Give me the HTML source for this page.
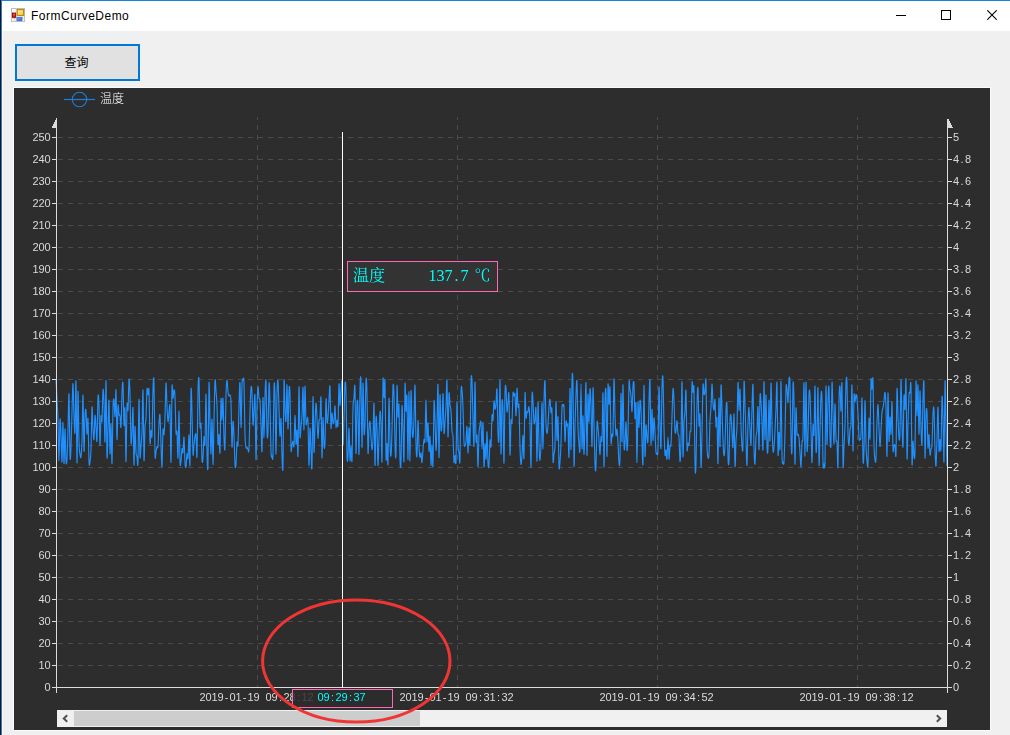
<!DOCTYPE html>
<html lang="zh-CN"><head><meta charset="utf-8"><title>FormCurveDemo</title>
<style>
html,body{margin:0;padding:0}
body{width:1010px;height:735px;overflow:hidden;position:relative;background:#f0f0f0;font-family:"Liberation Sans","Noto Sans CJK SC",sans-serif}
.edge0{position:absolute;left:0;top:0;width:1px;height:735px;background:#1c1008}
.edge1{position:absolute;left:1px;top:0;width:1px;height:735px;background:#1883d7}
.edge2{position:absolute;left:2px;top:31px;width:1px;height:704px;background:#fbf8f5}
.topb{position:absolute;left:1px;top:0;width:1009px;height:1px;background:#1883d7}
.title{position:absolute;left:2px;top:1px;width:1008px;height:30px;background:#fff}
.title .cap{position:absolute;left:29px;top:7px;font-size:12px;letter-spacing:0.48px;line-height:16px;color:#000;white-space:nowrap}
.btn{position:absolute;left:15px;top:44px;width:121px;height:33px;border:2px solid #0078d7;background:#e1e1e1;font-size:12px;line-height:35px;text-align:center;text-indent:-2px;color:#000}
.ctl{position:absolute;top:0;height:30px}
</style></head><body>
<div class="title">
<svg style="position:absolute;left:9px;top:7px" width="14" height="14" viewBox="0 0 15 15">
<rect x="0.5" y="0.5" width="14" height="14" fill="#fff" stroke="#b9b9b9"/>
<rect x="5" y="0" width="1" height="15" fill="#c8c8c8"/><rect x="0" y="4.5" width="5" height="1" fill="#c8c8c8"/><rect x="0" y="10.5" width="15" height="1" fill="#d4d4d4"/><rect x="12" y="9" width="1" height="6" fill="#c8c8c8"/><rect x="3" y="11" width="1" height="4" fill="#d4d4d4"/>
<defs><linearGradient id="gy" x1="0" y1="0" x2="1" y2="1"><stop offset="0" stop-color="#fff3c0"/><stop offset="1" stop-color="#ffc21a"/></linearGradient><linearGradient id="gr" x1="0" y1="0" x2="0" y2="1"><stop offset="0" stop-color="#f06a5a"/><stop offset="1" stop-color="#c81408"/></linearGradient><linearGradient id="gb" x1="0" y1="0" x2="1" y2="1"><stop offset="0" stop-color="#7aaaf4"/><stop offset="1" stop-color="#2f66d4"/></linearGradient></defs>
<rect x="6.7" y="1.7" width="6.8" height="6.3" fill="url(#gy)" stroke="#bf8d0a" stroke-width="1.3"/>
<rect x="1.6" y="5.6" width="3.3" height="4.4" fill="url(#gr)" stroke="#9c0f08" stroke-width="1.1"/>
<rect x="6.5" y="10" width="5" height="3.5" fill="url(#gb)" stroke="#3a6fd0"/>
</svg>
<div class="cap">FormCurveDemo</div>
<svg style="position:absolute;left:894px;top:14px" width="10" height="1"><rect width="10" height="1" fill="#000"/></svg>
<svg style="position:absolute;left:939px;top:9px" width="10" height="10"><rect x="0.5" y="0.5" width="9" height="9" fill="none" stroke="#000"/></svg>
<svg style="position:absolute;left:985px;top:9px" width="10" height="10"><path d="M0.3 0.3L9.7 9.7M9.7 0.3L0.3 9.7" stroke="#000" stroke-width="1.1" fill="none"/></svg>
</div>
<div class="topb"></div><div class="edge0"></div><div class="edge1"></div><div class="edge2"></div>
<div class="btn">查询</div>
<svg width="976" height="642" viewBox="14 88 976 642" style="position:absolute;left:14px;top:88px;display:block;will-change:transform;outline:1px solid #fbfbfb">
<rect x="14" y="88" width="976" height="642" fill="#2d2d2d"/>
<g stroke="#4b4b4b" stroke-width="1" stroke-dasharray="5 5" shape-rendering="crispEdges"><line x1="57.5" y1="665.5" x2="947" y2="665.5"/><line x1="57.5" y1="643.5" x2="947" y2="643.5"/><line x1="57.5" y1="621.5" x2="947" y2="621.5"/><line x1="57.5" y1="599.5" x2="947" y2="599.5"/><line x1="57.5" y1="577.5" x2="947" y2="577.5"/><line x1="57.5" y1="555.5" x2="947" y2="555.5"/><line x1="57.5" y1="533.5" x2="947" y2="533.5"/><line x1="57.5" y1="511.5" x2="947" y2="511.5"/><line x1="57.5" y1="489.5" x2="947" y2="489.5"/><line x1="57.5" y1="467.5" x2="947" y2="467.5"/><line x1="57.5" y1="445.5" x2="947" y2="445.5"/><line x1="57.5" y1="423.5" x2="947" y2="423.5"/><line x1="57.5" y1="401.5" x2="947" y2="401.5"/><line x1="57.5" y1="379.5" x2="947" y2="379.5"/><line x1="57.5" y1="357.5" x2="947" y2="357.5"/><line x1="57.5" y1="335.5" x2="947" y2="335.5"/><line x1="57.5" y1="313.5" x2="947" y2="313.5"/><line x1="57.5" y1="291.5" x2="947" y2="291.5"/><line x1="57.5" y1="269.5" x2="947" y2="269.5"/><line x1="57.5" y1="247.5" x2="947" y2="247.5"/><line x1="57.5" y1="225.5" x2="947" y2="225.5"/><line x1="57.5" y1="203.5" x2="947" y2="203.5"/><line x1="57.5" y1="181.5" x2="947" y2="181.5"/><line x1="57.5" y1="159.5" x2="947" y2="159.5"/><line x1="57.5" y1="137.5" x2="947" y2="137.5"/><line x1="257.5" y1="124.5" x2="257.5" y2="687"/><line x1="257.5" y1="117" x2="257.5" y2="119.5" stroke-dasharray="none"/><line x1="457.5" y1="124.5" x2="457.5" y2="687"/><line x1="457.5" y1="117" x2="457.5" y2="119.5" stroke-dasharray="none"/><line x1="657.5" y1="124.5" x2="657.5" y2="687"/><line x1="657.5" y1="117" x2="657.5" y2="119.5" stroke-dasharray="none"/><line x1="857.5" y1="124.5" x2="857.5" y2="687"/><line x1="857.5" y1="117" x2="857.5" y2="119.5" stroke-dasharray="none"/></g>
<path d="M56.0 380.1C56.2 383.2 56.7 392.0 57.0 398.8C57.3 405.6 57.7 410.5 58.0 420.8C58.3 431.1 58.7 460.8 59.0 460.6C59.3 460.5 59.7 424.1 60.0 419.8C60.3 415.5 60.7 427.8 61.0 434.8C61.3 441.8 61.7 464.0 62.0 461.9C62.3 459.8 62.7 422.0 63.0 422.3C63.3 422.6 63.7 462.6 64.0 463.7C64.3 464.8 64.7 429.3 65.0 428.8C65.3 428.4 65.7 455.8 66.0 460.9C66.3 465.9 66.7 464.2 67.0 459.0C67.3 453.8 67.7 440.4 68.0 429.6C68.3 418.8 68.7 389.8 69.0 394.2C69.3 398.6 69.7 447.3 70.0 456.1C70.3 465.0 70.7 454.7 71.0 447.4C71.3 440.0 71.7 422.4 72.0 411.8C72.3 401.2 72.7 382.9 73.0 383.6C73.3 384.3 73.7 408.1 74.0 416.2C74.3 424.3 74.7 437.9 75.0 432.1C75.3 426.2 75.7 376.0 76.0 381.1C76.3 386.2 76.7 461.2 77.0 462.9C77.3 464.6 77.7 395.0 78.0 391.5C78.3 387.9 78.7 431.0 79.0 441.5C79.3 452.0 79.7 451.8 80.0 454.3C80.3 456.8 80.7 459.0 81.0 456.6C81.3 454.2 81.7 450.1 82.0 439.9C82.3 429.6 82.7 393.3 83.0 395.2C83.3 397.1 83.7 447.7 84.0 451.1C84.3 454.5 84.7 422.5 85.0 415.8C85.3 409.1 85.7 407.7 86.0 410.8C86.3 413.8 86.7 432.9 87.0 434.2C87.3 435.6 87.7 414.3 88.0 418.8C88.3 423.3 88.7 454.3 89.0 461.5C89.3 468.6 89.7 463.9 90.0 461.8C90.3 459.7 90.7 458.0 91.0 448.9C91.3 439.8 91.7 410.4 92.0 407.1C92.3 403.9 92.7 424.0 93.0 429.4C93.3 434.7 93.7 441.7 94.0 439.4C94.3 437.0 94.7 417.5 95.0 415.5C95.3 413.4 95.7 422.9 96.0 427.1C96.3 431.3 96.7 445.6 97.0 440.6C97.3 435.6 97.7 402.9 98.0 397.1C98.3 391.2 98.7 397.4 99.0 405.5C99.3 413.6 99.7 443.7 100.0 445.5C100.3 447.3 100.7 420.6 101.0 416.5C101.3 412.3 101.7 425.2 102.0 420.8C102.3 416.4 102.7 393.0 103.0 390.0C103.3 387.0 103.7 394.2 104.0 402.8C104.3 411.4 104.7 445.3 105.0 441.7C105.3 438.0 105.7 378.3 106.0 380.7C106.3 383.2 106.7 448.4 107.0 456.6C107.3 464.9 107.7 439.6 108.0 430.2C108.3 420.8 108.7 396.5 109.0 400.4C109.3 404.3 109.7 449.7 110.0 453.6C110.3 457.6 110.7 422.3 111.0 424.0C111.3 425.6 111.7 466.2 112.0 463.5C112.3 460.9 112.7 418.8 113.0 408.2C113.3 397.6 113.7 398.3 114.0 399.7C114.3 401.1 114.7 418.2 115.0 416.6C115.3 414.9 115.7 386.2 116.0 390.0C116.3 393.8 116.7 436.7 117.0 439.4C117.3 442.0 117.7 409.9 118.0 405.8C118.3 401.7 118.7 413.0 119.0 414.7C119.3 416.4 119.7 413.9 120.0 416.0C120.3 418.0 120.7 430.7 121.0 426.9C121.3 423.0 121.7 400.2 122.0 393.1C122.3 385.9 122.7 378.5 123.0 383.9C123.3 389.2 123.7 421.2 124.0 425.3C124.3 429.4 124.7 402.5 125.0 408.6C125.3 414.6 125.7 462.2 126.0 461.7C126.3 461.1 126.7 413.9 127.0 405.3C127.3 396.7 127.7 414.3 128.0 410.1C128.3 405.8 128.7 382.2 129.0 379.6C129.3 377.0 129.7 384.3 130.0 394.7C130.3 405.1 130.7 435.6 131.0 442.0C131.3 448.4 131.7 438.7 132.0 433.1C132.3 427.4 132.7 402.8 133.0 408.2C133.3 413.5 133.7 462.0 134.0 465.0C134.3 468.0 134.7 428.5 135.0 426.4C135.3 424.2 135.7 447.2 136.0 452.2C136.3 457.3 136.7 455.1 137.0 456.7C137.3 458.3 137.7 471.4 138.0 461.8C138.3 452.3 138.7 400.4 139.0 399.4C139.3 398.4 139.7 448.0 140.0 455.6C140.3 463.3 140.7 449.0 141.0 445.2C141.3 441.4 141.7 441.7 142.0 432.6C142.3 423.4 142.7 385.8 143.0 390.3C143.3 394.9 143.7 453.7 144.0 459.9C144.3 466.1 144.7 434.3 145.0 427.5C145.3 420.6 145.7 425.0 146.0 418.6C146.3 412.3 146.7 393.2 147.0 389.3C147.3 385.3 147.7 394.6 148.0 394.9C148.3 395.2 148.7 383.0 149.0 391.0C149.3 398.9 149.7 435.9 150.0 442.5C150.3 449.1 150.7 431.6 151.0 430.5C151.3 429.3 151.7 442.3 152.0 435.4C152.3 428.6 152.7 398.0 153.0 389.2C153.3 380.4 153.7 372.0 154.0 382.7C154.3 393.5 154.7 442.3 155.0 453.7C155.3 465.2 155.7 452.7 156.0 451.5C156.3 450.3 156.7 447.4 157.0 446.6C157.3 445.8 157.7 450.2 158.0 446.5C158.3 442.8 158.7 429.5 159.0 424.3C159.3 419.1 159.7 411.9 160.0 415.2C160.3 418.4 160.7 435.3 161.0 443.9C161.3 452.5 161.7 468.9 162.0 466.6C162.3 464.3 162.7 435.5 163.0 430.1C163.3 424.8 163.7 436.7 164.0 434.5C164.3 432.3 164.7 425.7 165.0 417.2C165.3 408.6 165.7 384.9 166.0 383.1C166.3 381.3 166.7 399.8 167.0 406.2C167.3 412.7 167.7 420.6 168.0 421.6C168.3 422.7 168.7 415.0 169.0 412.7C169.3 410.3 169.7 399.2 170.0 407.5C170.3 415.8 170.7 465.5 171.0 462.2C171.3 459.0 171.7 398.5 172.0 387.8C172.3 377.2 172.7 398.0 173.0 398.4C173.3 398.7 173.7 390.3 174.0 390.0C174.3 389.8 174.7 389.7 175.0 396.8C175.3 403.9 175.7 426.6 176.0 432.5C176.3 438.3 176.7 427.7 177.0 431.9C177.3 436.1 177.7 461.3 178.0 457.9C178.3 454.4 178.7 410.6 179.0 411.2C179.3 411.8 179.7 453.2 180.0 461.5C180.3 469.8 180.7 463.2 181.0 461.1C181.3 458.9 181.7 450.0 182.0 448.6C182.3 447.2 182.7 454.6 183.0 452.7C183.3 450.8 183.7 435.5 184.0 437.1C184.3 438.7 184.7 457.4 185.0 462.4C185.3 467.4 185.7 468.4 186.0 467.0C186.3 465.5 186.7 455.2 187.0 453.7C187.3 452.2 187.7 461.2 188.0 458.1C188.3 455.0 188.7 433.9 189.0 435.0C189.3 436.1 189.7 472.2 190.0 464.8C190.3 457.3 190.7 398.7 191.0 390.1C191.3 381.4 191.7 402.3 192.0 413.0C192.3 423.6 192.7 448.6 193.0 453.9C193.3 459.2 193.7 447.7 194.0 444.8C194.3 441.9 194.7 438.1 195.0 436.4C195.3 434.8 195.7 431.7 196.0 435.0C196.3 438.2 196.7 463.3 197.0 456.2C197.3 449.1 197.7 405.1 198.0 392.3C198.3 379.5 198.7 374.0 199.0 379.6C199.3 385.2 199.7 418.5 200.0 426.0C200.3 433.5 200.7 418.8 201.0 424.4C201.3 430.0 201.7 453.8 202.0 459.4C202.3 465.0 202.7 461.8 203.0 458.0C203.3 454.2 203.7 439.2 204.0 436.8C204.3 434.5 204.7 450.8 205.0 443.7C205.3 436.6 205.7 392.5 206.0 394.1C206.3 395.6 206.7 441.0 207.0 452.8C207.3 464.6 207.7 476.5 208.0 465.0C208.3 453.4 208.7 390.7 209.0 383.3C209.3 375.9 209.7 408.7 210.0 420.5C210.3 432.3 210.7 454.3 211.0 454.1C211.3 453.9 211.7 417.4 212.0 419.2C212.3 421.0 212.7 464.4 213.0 464.6C213.3 464.8 213.7 434.5 214.0 420.5C214.3 406.6 214.7 385.8 215.0 380.9C215.3 376.0 215.7 386.9 216.0 391.0C216.3 395.2 216.7 396.9 217.0 405.7C217.3 414.6 217.7 439.2 218.0 444.0C218.3 448.9 218.7 433.4 219.0 434.7C219.3 436.1 219.7 458.2 220.0 452.3C220.3 446.4 220.7 404.4 221.0 399.1C221.3 393.7 221.7 420.2 222.0 420.1C222.3 420.0 222.7 395.5 223.0 398.4C223.3 401.4 223.7 429.8 224.0 438.0C224.3 446.1 224.7 454.4 225.0 447.4C225.3 440.3 225.7 406.8 226.0 395.6C226.3 384.4 226.7 380.9 227.0 380.3C227.3 379.7 227.7 389.3 228.0 392.0C228.3 394.6 228.7 395.6 229.0 396.1C229.3 396.6 229.7 394.0 230.0 395.0C230.3 396.0 230.7 393.2 231.0 401.9C231.3 410.6 231.7 443.8 232.0 447.0C232.3 450.3 232.7 423.3 233.0 421.4C233.3 419.6 233.7 428.5 234.0 435.7C234.3 442.9 234.7 459.6 235.0 464.4C235.3 469.3 235.7 468.2 236.0 464.5C236.3 460.9 236.7 445.8 237.0 442.4C237.3 439.0 237.7 450.3 238.0 444.2C238.3 438.1 238.7 416.3 239.0 406.1C239.3 395.8 239.7 379.2 240.0 382.8C240.3 386.4 240.7 427.4 241.0 427.6C241.3 427.9 241.7 392.5 242.0 384.5C242.3 376.6 242.7 380.3 243.0 380.1C243.3 379.8 243.7 373.8 244.0 383.0C244.3 392.1 244.7 424.1 245.0 434.9C245.3 445.7 245.7 445.6 246.0 447.6C246.3 449.6 246.7 446.7 247.0 447.0C247.3 447.4 247.7 449.4 248.0 449.7C248.3 450.0 248.7 455.3 249.0 449.0C249.3 442.7 249.7 422.3 250.0 412.1C250.3 401.9 250.7 390.9 251.0 387.8C251.3 384.6 251.7 386.9 252.0 393.0C252.3 399.2 252.7 422.1 253.0 424.8C253.3 427.6 253.7 414.2 254.0 409.5C254.3 404.8 254.7 388.3 255.0 396.6C255.3 405.0 255.7 457.5 256.0 459.5C256.3 461.6 256.7 421.0 257.0 408.9C257.3 396.8 257.7 388.7 258.0 386.9C258.3 385.2 258.7 395.8 259.0 398.2C259.3 400.5 259.7 396.5 260.0 401.0C260.3 405.5 260.7 416.5 261.0 424.9C261.3 433.3 261.7 455.9 262.0 451.3C262.3 446.7 262.7 399.8 263.0 397.6C263.3 395.3 263.7 437.9 264.0 437.7C264.3 437.6 264.7 405.9 265.0 396.5C265.3 387.2 265.7 375.6 266.0 381.5C266.3 387.4 266.7 423.8 267.0 432.2C267.3 440.5 267.7 439.8 268.0 431.7C268.3 423.6 268.7 388.4 269.0 383.7C269.3 378.9 269.7 391.8 270.0 403.2C270.3 414.6 270.7 443.3 271.0 452.0C271.3 460.8 271.7 455.5 272.0 455.8C272.3 456.1 272.7 465.1 273.0 453.7C273.3 442.3 273.7 397.0 274.0 387.4C274.3 377.8 274.7 384.9 275.0 396.0C275.3 407.2 275.7 454.4 276.0 454.1C276.3 453.8 276.7 406.5 277.0 394.3C277.3 382.0 277.7 378.3 278.0 380.7C278.3 383.2 278.7 399.9 279.0 409.2C279.3 418.4 279.7 434.6 280.0 436.2C280.3 437.8 280.7 415.5 281.0 418.7C281.3 421.9 281.7 447.6 282.0 455.5C282.3 463.3 282.7 478.1 283.0 465.7C283.3 453.4 283.7 390.9 284.0 381.6C284.3 372.2 284.7 403.3 285.0 409.8C285.3 416.3 285.7 424.8 286.0 420.7C286.3 416.5 286.7 383.5 287.0 384.8C287.3 386.2 287.7 427.9 288.0 428.8C288.3 429.7 288.7 396.0 289.0 390.3C289.3 384.5 289.7 384.6 290.0 394.3C290.3 404.0 290.7 440.0 291.0 448.4C291.3 456.9 291.7 446.0 292.0 444.8C292.3 443.6 292.7 441.1 293.0 441.2C293.3 441.4 293.7 450.1 294.0 445.8C294.3 441.5 294.7 415.7 295.0 415.4C295.3 415.1 295.7 441.7 296.0 444.2C296.3 446.6 296.7 428.2 297.0 430.1C297.3 432.0 297.7 462.7 298.0 455.5C298.3 448.3 298.7 390.2 299.0 386.9C299.3 383.7 299.7 429.2 300.0 435.9C300.3 442.5 300.7 430.0 301.0 426.7C301.3 423.3 301.7 422.2 302.0 415.7C302.3 409.1 302.7 385.0 303.0 387.4C303.3 389.8 303.7 430.2 304.0 430.0C304.3 429.8 304.7 387.4 305.0 386.2C305.3 385.1 305.7 417.2 306.0 422.9C306.3 428.5 306.7 420.5 307.0 420.2C307.3 419.9 307.7 413.4 308.0 420.9C308.3 428.5 308.7 464.1 309.0 465.4C309.3 466.6 309.7 430.7 310.0 428.3C310.3 425.9 310.7 444.5 311.0 450.9C311.3 457.3 311.7 475.7 312.0 466.7C312.3 457.6 312.7 399.1 313.0 396.7C313.3 394.2 313.7 447.1 314.0 451.8C314.3 456.6 314.7 433.4 315.0 425.3C315.3 417.2 315.7 404.4 316.0 403.2C316.3 402.0 316.7 412.2 317.0 418.0C317.3 423.9 317.7 437.8 318.0 438.3C318.3 438.9 318.7 424.8 319.0 421.4C319.3 418.0 319.7 422.0 320.0 418.1C320.3 414.2 320.7 391.4 321.0 398.0C321.3 404.6 321.7 454.4 322.0 457.7C322.3 460.9 322.7 419.8 323.0 417.7C323.3 415.6 323.7 441.0 324.0 445.1C324.3 449.3 324.7 450.3 325.0 442.6C325.3 434.9 325.7 402.4 326.0 399.0C326.3 395.7 326.7 419.2 327.0 422.3C327.3 425.4 327.7 421.3 328.0 417.6C328.3 413.9 328.7 405.3 329.0 400.1C329.3 395.0 329.7 382.1 330.0 386.7C330.3 391.3 330.7 423.6 331.0 428.0C331.3 432.4 331.7 414.0 332.0 413.1C332.3 412.2 332.7 421.0 333.0 422.5C333.3 424.0 333.7 424.7 334.0 421.9C334.3 419.2 334.7 405.2 335.0 406.0C335.3 406.9 335.7 424.9 336.0 427.2C336.3 429.5 336.7 420.4 337.0 420.1C337.3 419.7 337.7 430.9 338.0 424.9C338.3 418.9 338.7 387.4 339.0 384.1C339.3 380.9 339.7 404.5 340.0 405.5C340.3 406.4 340.7 393.4 341.0 389.9C341.3 386.3 341.7 375.0 342.0 384.1C342.3 393.1 342.7 438.5 343.0 444.2C343.3 449.8 343.7 427.8 344.0 417.8C344.3 407.7 344.7 388.1 345.0 384.0C345.3 379.9 345.7 381.3 346.0 393.1C346.3 404.9 346.7 444.4 347.0 454.9C347.3 465.5 347.7 460.8 348.0 456.3C348.3 451.8 348.7 427.4 349.0 428.1C349.3 428.8 349.7 457.7 350.0 460.6C350.3 463.6 350.7 445.8 351.0 445.8C351.3 445.8 351.7 466.9 352.0 460.6C352.3 454.3 352.7 418.5 353.0 408.1C353.3 397.7 353.7 401.4 354.0 398.0C354.3 394.7 354.7 378.8 355.0 388.1C355.3 397.3 355.7 450.8 356.0 453.4C356.3 456.1 356.7 411.4 357.0 404.0C357.3 396.6 357.7 400.5 358.0 408.9C358.3 417.3 358.7 457.7 359.0 454.4C359.3 451.2 359.7 401.4 360.0 389.3C360.3 377.2 360.7 372.1 361.0 381.9C361.3 391.6 361.7 447.5 362.0 447.7C362.3 447.9 362.7 385.8 363.0 383.2C363.3 380.6 363.7 425.1 364.0 432.0C364.3 438.8 364.7 432.8 365.0 424.1C365.3 415.4 365.7 385.0 366.0 379.9C366.3 374.8 366.7 381.6 367.0 393.7C367.3 405.9 367.7 446.9 368.0 452.8C368.3 458.7 368.7 434.2 369.0 429.0C369.3 423.8 369.7 420.3 370.0 421.6C370.3 423.0 370.7 432.5 371.0 437.2C371.3 441.8 371.7 449.5 372.0 449.8C372.3 450.1 372.7 446.7 373.0 439.0C373.3 431.2 373.7 399.1 374.0 403.5C374.3 407.8 374.7 462.8 375.0 465.3C375.3 467.8 375.7 424.4 376.0 418.2C376.3 412.1 376.7 420.4 377.0 428.2C377.3 436.1 377.7 463.8 378.0 465.4C378.3 467.0 378.7 446.7 379.0 437.8C379.3 428.9 379.7 414.7 380.0 412.1C380.3 409.4 380.7 413.7 381.0 421.9C381.3 430.1 381.7 468.3 382.0 461.3C382.3 454.4 382.7 390.9 383.0 380.3C383.3 369.7 383.7 397.4 384.0 397.6C384.3 397.8 384.7 371.5 385.0 381.5C385.3 391.5 385.7 447.4 386.0 457.8C386.3 468.1 386.7 442.7 387.0 443.6C387.3 444.6 387.7 471.0 388.0 463.5C388.3 456.0 388.7 401.8 389.0 398.4C389.3 395.1 389.7 433.7 390.0 443.2C390.3 452.7 390.7 457.8 391.0 455.6C391.3 453.4 391.7 441.3 392.0 429.8C392.3 418.4 392.7 392.6 393.0 386.8C393.3 381.0 393.7 385.4 394.0 394.9C394.3 404.5 394.7 434.4 395.0 444.2C395.3 454.1 395.7 463.5 396.0 453.9C396.3 444.2 396.7 392.3 397.0 386.1C397.3 379.9 397.7 413.6 398.0 416.8C398.3 420.0 398.7 398.3 399.0 405.4C399.3 412.4 399.7 449.7 400.0 459.1C400.3 468.6 400.7 470.7 401.0 461.9C401.3 453.2 401.7 411.8 402.0 406.4C402.3 401.0 402.7 420.5 403.0 429.6C403.3 438.6 403.7 468.2 404.0 460.6C404.3 453.1 404.7 392.7 405.0 384.4C405.3 376.2 405.7 409.2 406.0 411.2C406.3 413.2 406.7 388.4 407.0 396.5C407.3 404.5 407.7 460.4 408.0 459.6C408.3 458.8 408.7 391.4 409.0 391.7C409.3 391.9 409.7 461.2 410.0 461.1C410.3 461.0 410.7 396.8 411.0 391.1C411.3 385.4 411.7 419.4 412.0 427.1C412.3 434.7 412.7 438.6 413.0 437.2C413.3 435.7 413.7 426.9 414.0 418.3C414.3 409.7 414.7 381.3 415.0 385.5C415.3 389.6 415.7 431.7 416.0 443.4C416.3 455.1 416.7 459.4 417.0 455.6C417.3 451.8 417.7 422.2 418.0 420.6C418.3 419.0 418.7 439.9 419.0 446.0C419.3 452.1 419.7 456.2 420.0 457.4C420.3 458.5 420.7 451.9 421.0 452.8C421.3 453.7 421.7 463.2 422.0 462.6C422.3 462.0 422.7 453.1 423.0 449.2C423.3 445.4 423.7 441.1 424.0 439.5C424.3 438.0 424.7 446.7 425.0 440.2C425.3 433.6 425.7 399.9 426.0 400.2C426.3 400.4 426.7 437.7 427.0 441.5C427.3 445.3 427.7 421.3 428.0 423.0C428.3 424.6 428.7 449.1 429.0 451.3C429.3 453.6 429.7 434.1 430.0 436.5C430.3 438.8 430.7 464.0 431.0 465.4C431.3 466.8 431.7 444.9 432.0 445.0C432.3 445.0 432.7 472.7 433.0 465.6C433.3 458.6 433.7 410.3 434.0 402.5C434.3 394.6 434.7 410.5 435.0 418.5C435.3 426.5 435.7 449.2 436.0 450.3C436.3 451.4 436.7 436.2 437.0 425.2C437.3 414.3 437.7 379.3 438.0 384.8C438.3 390.2 438.7 455.9 439.0 457.6C439.3 459.3 439.7 399.7 440.0 394.9C440.3 390.2 440.7 424.2 441.0 429.0C441.3 433.7 441.7 429.3 442.0 423.4C442.3 417.5 442.7 392.1 443.0 393.6C443.3 395.0 443.7 427.6 444.0 432.4C444.3 437.2 444.7 426.7 445.0 422.4C445.3 418.1 445.7 413.5 446.0 406.5C446.3 399.5 446.7 375.5 447.0 380.5C447.3 385.6 447.7 434.6 448.0 436.8C448.3 439.0 448.7 399.1 449.0 393.8C449.3 388.4 449.7 401.9 450.0 404.8C450.3 407.7 450.7 406.6 451.0 411.0C451.3 415.5 451.7 427.2 452.0 431.4C452.3 435.6 452.7 431.3 453.0 436.4C453.3 441.6 453.7 459.0 454.0 462.2C454.3 465.4 454.7 455.8 455.0 455.6C455.3 455.3 455.7 469.7 456.0 460.8C456.3 451.8 456.7 404.5 457.0 401.8C457.3 399.1 457.7 436.0 458.0 444.5C458.3 453.0 458.7 450.1 459.0 452.6C459.3 455.1 459.7 469.5 460.0 459.6C460.3 449.6 460.7 404.5 461.0 393.0C461.3 381.4 461.7 387.9 462.0 390.4C462.3 392.9 462.7 399.4 463.0 408.0C463.3 416.6 463.7 435.9 464.0 442.2C464.3 448.5 464.7 445.8 465.0 445.7C465.3 445.5 465.7 444.4 466.0 441.2C466.3 438.0 466.7 424.6 467.0 426.6C467.3 428.6 467.7 452.9 468.0 453.1C468.3 453.3 468.7 429.3 469.0 427.8C469.3 426.2 469.7 451.4 470.0 443.8C470.3 436.3 470.7 392.8 471.0 382.4C471.3 372.0 471.7 375.3 472.0 381.4C472.3 387.5 472.7 408.2 473.0 418.9C473.3 429.5 473.7 451.6 474.0 445.5C474.3 439.3 474.7 383.0 475.0 382.0C475.3 381.1 475.7 430.8 476.0 439.8C476.3 448.7 476.7 431.1 477.0 435.6C477.3 440.1 477.7 467.3 478.0 466.9C478.3 466.5 478.7 440.4 479.0 433.4C479.3 426.5 479.7 427.0 480.0 425.2C480.3 423.5 480.7 418.7 481.0 422.8C481.3 426.8 481.7 449.3 482.0 449.3C482.3 449.3 482.7 419.7 483.0 422.6C483.3 425.5 483.7 463.0 484.0 466.6C484.3 470.1 484.7 445.0 485.0 443.8C485.3 442.5 485.7 461.1 486.0 459.1C486.3 457.1 486.7 431.1 487.0 431.8C487.3 432.5 487.7 457.8 488.0 463.3C488.3 468.9 488.7 468.9 489.0 465.0C489.3 461.2 489.7 443.3 490.0 440.2C490.3 437.1 490.7 450.6 491.0 446.5C491.3 442.4 491.7 419.8 492.0 415.5C492.3 411.1 492.7 422.9 493.0 420.4C493.3 418.0 493.7 402.8 494.0 401.0C494.3 399.1 494.7 408.6 495.0 409.1C495.3 409.6 495.7 407.2 496.0 404.0C496.3 400.7 496.7 384.9 497.0 389.6C497.3 394.4 497.7 424.6 498.0 432.7C498.3 440.8 498.7 447.0 499.0 438.3C499.3 429.6 499.7 377.8 500.0 380.3C500.3 382.9 500.7 450.0 501.0 453.8C501.3 457.7 501.7 410.5 502.0 403.3C502.3 396.0 502.7 400.4 503.0 410.4C503.3 420.4 503.7 466.0 504.0 463.1C504.3 460.3 504.7 405.9 505.0 393.5C505.3 381.1 505.7 385.5 506.0 388.5C506.3 391.6 506.7 409.5 507.0 411.8C507.3 414.1 507.7 405.1 508.0 402.4C508.3 399.7 508.7 386.8 509.0 395.5C509.3 404.2 509.7 450.5 510.0 454.7C510.3 459.0 510.7 426.3 511.0 420.9C511.3 415.6 511.7 427.2 512.0 422.6C512.3 418.1 512.7 397.9 513.0 393.5C513.3 389.1 513.7 396.1 514.0 396.2C514.3 396.3 514.7 391.0 515.0 394.3C515.3 397.5 515.7 416.6 516.0 415.6C516.3 414.6 516.7 389.9 517.0 388.4C517.3 387.0 517.7 404.0 518.0 406.9C518.3 409.8 518.7 399.3 519.0 406.0C519.3 412.6 519.7 437.1 520.0 446.8C520.3 456.5 520.7 462.8 521.0 464.3C521.3 465.7 521.7 460.1 522.0 455.3C522.3 450.5 522.7 434.8 523.0 435.3C523.3 435.7 523.7 464.7 524.0 457.8C524.3 450.8 524.7 400.1 525.0 393.4C525.3 386.8 525.7 414.8 526.0 417.8C526.3 420.9 526.7 412.7 527.0 411.8C527.3 410.8 527.7 412.7 528.0 411.9C528.3 411.1 528.7 405.1 529.0 407.1C529.3 409.1 529.7 414.0 530.0 423.9C530.3 433.9 530.7 471.2 531.0 466.7C531.3 462.2 531.7 407.7 532.0 396.8C532.3 385.9 532.7 396.8 533.0 401.2C533.3 405.5 533.7 419.6 534.0 422.7C534.3 425.9 534.7 422.2 535.0 419.9C535.3 417.6 535.7 402.1 536.0 409.0C536.3 415.9 536.7 462.3 537.0 461.2C537.3 460.1 537.7 404.9 538.0 402.2C538.3 399.4 538.7 435.1 539.0 444.8C539.3 454.5 539.7 460.6 540.0 460.4C540.3 460.3 540.7 453.2 541.0 443.6C541.3 434.0 541.7 401.9 542.0 402.8C542.3 403.7 542.7 449.1 543.0 448.9C543.3 448.8 543.7 413.2 544.0 401.9C544.3 390.6 544.7 377.5 545.0 381.1C545.3 384.7 545.7 414.8 546.0 423.5C546.3 432.2 546.7 433.1 547.0 433.3C547.3 433.6 547.7 429.3 548.0 424.8C548.3 420.4 548.7 411.1 549.0 406.8C549.3 402.6 549.7 398.5 550.0 399.5C550.3 400.5 550.7 410.9 551.0 412.7C551.3 414.5 551.7 402.5 552.0 410.4C552.3 418.3 552.7 452.9 553.0 460.2C553.3 467.4 553.7 456.6 554.0 454.0C554.3 451.4 554.7 453.4 555.0 444.7C555.3 435.9 555.7 402.3 556.0 401.6C556.3 400.9 556.7 437.6 557.0 440.2C557.3 442.8 557.7 412.8 558.0 417.0C558.3 421.3 558.7 458.5 559.0 465.9C559.3 473.3 559.7 465.4 560.0 461.7C560.3 457.9 560.7 452.3 561.0 443.3C561.3 434.4 561.7 414.1 562.0 407.9C562.3 401.7 562.7 406.1 563.0 406.1C563.3 406.0 563.7 401.7 564.0 407.5C564.3 413.4 564.7 439.1 565.0 441.4C565.3 443.7 565.7 424.1 566.0 421.5C566.3 419.0 566.7 425.4 567.0 426.1C567.3 426.8 567.7 420.9 568.0 426.0C568.3 431.0 568.7 462.8 569.0 456.6C569.3 450.3 569.7 389.5 570.0 388.4C570.3 387.2 570.7 450.7 571.0 449.5C571.3 448.2 571.7 391.7 572.0 380.9C572.3 370.1 572.7 370.5 573.0 384.6C573.3 398.7 573.7 458.5 574.0 465.5C574.3 472.5 574.7 438.4 575.0 426.6C575.3 414.8 575.7 402.3 576.0 394.8C576.3 387.4 576.7 376.4 577.0 381.8C577.3 387.2 577.7 417.2 578.0 427.4C578.3 437.7 578.7 439.8 579.0 443.4C579.3 446.9 579.7 458.5 580.0 448.5C580.3 438.6 580.7 383.8 581.0 383.8C581.3 383.8 581.7 443.1 582.0 448.5C582.3 453.8 582.7 414.8 583.0 415.8C583.3 416.8 583.7 453.7 584.0 454.5C584.3 455.4 584.7 432.8 585.0 420.9C585.3 409.0 585.7 377.4 586.0 383.2C586.3 388.9 586.7 453.4 587.0 455.3C587.3 457.3 587.7 400.3 588.0 394.8C588.3 389.3 588.7 423.2 589.0 422.2C589.3 421.3 589.7 391.8 590.0 389.0C590.3 386.1 590.7 395.5 591.0 405.1C591.3 414.7 591.7 449.5 592.0 446.6C592.3 443.8 592.7 391.7 593.0 388.0C593.3 384.3 593.7 411.4 594.0 424.2C594.3 437.0 594.7 457.7 595.0 464.8C595.3 471.9 595.7 473.5 596.0 466.7C596.3 459.8 596.7 430.3 597.0 423.7C597.3 417.2 597.7 424.6 598.0 427.3C598.3 430.1 598.7 435.9 599.0 440.4C599.3 445.0 599.7 455.2 600.0 454.6C600.3 454.0 600.7 439.3 601.0 436.7C601.3 434.2 601.7 446.5 602.0 439.2C602.3 431.9 602.7 388.4 603.0 393.1C603.3 397.7 603.7 465.5 604.0 466.8C604.3 468.2 604.7 413.2 605.0 400.9C605.3 388.7 605.7 383.9 606.0 393.2C606.3 402.4 606.7 457.7 607.0 456.4C607.3 455.2 607.7 394.2 608.0 385.5C608.3 376.8 608.7 403.9 609.0 404.3C609.3 404.6 609.7 381.5 610.0 387.7C610.3 393.9 610.7 433.7 611.0 441.5C611.3 449.3 611.7 435.8 612.0 434.2C612.3 432.7 612.7 441.6 613.0 432.4C613.3 423.2 613.7 382.0 614.0 379.1C614.3 376.2 614.7 405.8 615.0 415.2C615.3 424.5 615.7 432.9 616.0 435.3C616.3 437.6 616.7 428.1 617.0 429.3C617.3 430.6 617.7 437.2 618.0 442.8C618.3 448.4 618.7 460.2 619.0 462.8C619.3 465.3 619.7 469.6 620.0 458.0C620.3 446.5 620.7 396.2 621.0 393.5C621.3 390.9 621.7 443.3 622.0 441.9C622.3 440.4 622.7 384.1 623.0 384.7C623.3 385.2 623.7 435.2 624.0 445.1C624.3 454.9 624.7 447.5 625.0 443.6C625.3 439.8 625.7 420.9 626.0 422.0C626.3 423.1 626.7 448.3 627.0 450.3C627.3 452.3 627.7 445.4 628.0 434.1C628.3 422.9 628.7 390.4 629.0 382.9C629.3 375.4 629.7 387.1 630.0 389.2C630.3 391.3 630.7 391.8 631.0 395.5C631.3 399.3 631.7 413.0 632.0 411.5C632.3 410.0 632.7 391.2 633.0 386.6C633.3 382.1 633.7 378.9 634.0 384.2C634.3 389.6 634.7 415.4 635.0 418.7C635.3 421.9 635.7 396.3 636.0 403.7C636.3 411.0 636.7 462.8 637.0 462.6C637.3 462.5 637.7 408.4 638.0 402.6C638.3 396.7 638.7 427.6 639.0 427.3C639.3 427.0 639.7 403.6 640.0 400.8C640.3 397.9 640.7 403.4 641.0 410.3C641.3 417.1 641.7 433.1 642.0 441.8C642.3 450.5 642.7 472.1 643.0 462.7C643.3 453.3 643.7 386.6 644.0 385.4C644.3 384.3 644.7 449.1 645.0 455.8C645.3 462.5 645.7 428.6 646.0 425.4C646.3 422.3 646.7 434.2 647.0 436.8C647.3 439.3 647.7 446.6 648.0 440.8C648.3 435.0 648.7 411.9 649.0 402.0C649.3 392.0 649.7 374.1 650.0 381.1C650.3 388.1 650.7 439.4 651.0 444.1C651.3 448.8 651.7 409.9 652.0 409.3C652.3 408.7 652.7 439.1 653.0 440.5C653.3 442.0 653.7 419.3 654.0 418.0C654.3 416.6 654.7 426.6 655.0 432.3C655.3 438.0 655.7 448.9 656.0 452.3C656.3 455.7 656.7 453.4 657.0 452.8C657.3 452.2 657.7 459.6 658.0 448.7C658.3 437.8 658.7 391.5 659.0 387.3C659.3 383.0 659.7 413.2 660.0 423.3C660.3 433.3 660.7 453.6 661.0 447.6C661.3 441.6 661.7 398.6 662.0 387.2C662.3 375.9 662.7 372.6 663.0 379.3C663.3 386.0 663.7 414.8 664.0 427.4C664.3 440.0 664.7 450.9 665.0 454.7C665.3 458.5 665.7 449.4 666.0 450.1C666.3 450.8 666.7 461.2 667.0 459.0C667.3 456.8 667.7 436.9 668.0 436.9C668.3 436.9 668.7 457.5 669.0 459.0C669.3 460.5 669.7 448.4 670.0 446.0C670.3 443.5 670.7 449.1 671.0 444.3C671.3 439.4 671.7 426.1 672.0 416.9C672.3 407.6 672.7 391.6 673.0 388.9C673.3 386.3 673.7 394.1 674.0 401.0C674.3 408.0 674.7 425.8 675.0 430.7C675.3 435.6 675.7 432.2 676.0 430.6C676.3 428.9 676.7 420.3 677.0 420.9C677.3 421.4 677.7 431.1 678.0 433.8C678.3 436.6 678.7 432.6 679.0 437.2C679.3 441.9 679.7 460.6 680.0 461.5C680.3 462.4 680.7 455.9 681.0 442.6C681.3 429.3 681.7 379.6 682.0 381.8C682.3 384.1 682.7 449.1 683.0 455.9C683.3 462.7 683.7 430.1 684.0 422.7C684.3 415.3 684.7 416.9 685.0 411.6C685.3 406.3 685.7 385.0 686.0 391.1C686.3 397.1 686.7 439.3 687.0 448.0C687.3 456.7 687.7 443.6 688.0 443.2C688.3 442.7 688.7 447.0 689.0 445.1C689.3 443.2 689.7 434.7 690.0 431.8C690.3 428.9 690.7 435.9 691.0 427.8C691.3 419.6 691.7 389.0 692.0 383.1C692.3 377.1 692.7 391.1 693.0 392.3C693.3 393.5 693.7 378.1 694.0 390.2C694.3 402.3 694.7 452.8 695.0 465.1C695.3 477.4 695.7 474.2 696.0 464.2C696.3 454.1 696.7 417.2 697.0 404.6C697.3 391.9 697.7 384.7 698.0 388.2C698.3 391.6 698.7 420.8 699.0 425.4C699.3 429.9 699.7 408.4 700.0 415.3C700.3 422.3 700.7 464.1 701.0 467.0C701.3 469.9 701.7 446.1 702.0 432.5C702.3 419.0 702.7 391.8 703.0 385.4C703.3 379.1 703.7 393.3 704.0 394.3C704.3 395.4 704.7 393.9 705.0 391.7C705.3 389.6 705.7 372.5 706.0 381.4C706.3 390.3 706.7 432.5 707.0 445.1C707.3 457.8 707.7 456.0 708.0 457.4C708.3 458.8 708.7 459.5 709.0 453.4C709.3 447.4 709.7 428.8 710.0 421.0C710.3 413.3 710.7 413.1 711.0 407.0C711.3 400.8 711.7 384.7 712.0 384.1C712.3 383.6 712.7 399.2 713.0 403.5C713.3 407.8 713.7 410.7 714.0 410.0C714.3 409.4 714.7 396.9 715.0 399.7C715.3 402.5 715.7 423.6 716.0 426.8C716.3 429.9 716.7 412.3 717.0 418.5C717.3 424.6 717.7 466.9 718.0 463.5C718.3 460.1 718.7 401.0 719.0 398.2C719.3 395.3 719.7 448.6 720.0 446.5C720.3 444.5 720.7 392.1 721.0 386.0C721.3 380.0 721.7 401.2 722.0 410.2C722.3 419.2 722.7 432.7 723.0 440.3C723.3 447.9 723.7 455.0 724.0 455.7C724.3 456.5 724.7 452.3 725.0 444.8C725.3 437.4 725.7 417.6 726.0 411.0C726.3 404.5 726.7 397.8 727.0 405.5C727.3 413.2 727.7 447.9 728.0 457.1C728.3 466.3 728.7 466.9 729.0 460.8C729.3 454.8 729.7 428.4 730.0 420.8C730.3 413.3 730.7 413.7 731.0 415.7C731.3 417.7 731.7 427.6 732.0 432.8C732.3 438.1 732.7 450.4 733.0 447.3C733.3 444.2 733.7 411.0 734.0 414.1C734.3 417.2 734.7 461.7 735.0 466.1C735.3 470.5 735.7 447.1 736.0 440.5C736.3 433.9 736.7 436.1 737.0 426.5C737.3 416.8 737.7 385.3 738.0 382.6C738.3 379.9 738.7 409.2 739.0 410.3C739.3 411.4 739.7 386.7 740.0 389.2C740.3 391.7 740.7 415.7 741.0 425.2C741.3 434.7 741.7 443.0 742.0 446.3C742.3 449.7 742.7 455.9 743.0 445.3C743.3 434.6 743.7 389.2 744.0 382.5C744.3 375.8 744.7 395.4 745.0 405.0C745.3 414.6 745.7 429.9 746.0 439.9C746.3 450.0 746.7 467.9 747.0 465.1C747.3 462.3 747.7 432.7 748.0 423.1C748.3 413.6 748.7 406.5 749.0 407.6C749.3 408.8 749.7 423.9 750.0 430.0C750.3 436.2 750.7 448.0 751.0 444.4C751.3 440.7 751.7 418.1 752.0 408.3C752.3 398.5 752.7 379.1 753.0 385.6C753.3 392.0 753.7 434.0 754.0 447.0C754.3 460.1 754.7 465.6 755.0 464.0C755.3 462.4 755.7 442.9 756.0 437.3C756.3 431.6 756.7 435.0 757.0 430.0C757.3 424.9 757.7 403.7 758.0 406.9C758.3 410.2 758.7 451.2 759.0 449.6C759.3 447.9 759.7 404.8 760.0 396.9C760.3 388.9 760.7 397.7 761.0 402.0C761.3 406.2 761.7 414.7 762.0 422.6C762.3 430.4 762.7 455.8 763.0 448.9C763.3 442.1 763.7 383.2 764.0 381.7C764.3 380.1 764.7 437.4 765.0 439.6C765.3 441.8 765.7 393.7 766.0 394.8C766.3 396.0 766.7 437.9 767.0 446.7C767.3 455.5 767.7 455.3 768.0 447.5C768.3 439.7 768.7 401.2 769.0 400.1C769.3 399.0 769.7 443.9 770.0 441.0C770.3 438.2 770.7 386.2 771.0 383.2C771.3 380.3 771.7 412.2 772.0 423.4C772.3 434.6 772.7 446.5 773.0 450.5C773.3 454.5 773.7 450.7 774.0 447.3C774.3 444.0 774.7 436.8 775.0 430.3C775.3 423.8 775.7 416.3 776.0 408.5C776.3 400.7 776.7 375.9 777.0 383.5C777.3 391.1 777.7 446.0 778.0 454.1C778.3 462.3 778.7 433.4 779.0 432.4C779.3 431.4 779.7 456.8 780.0 448.3C780.3 439.7 780.7 380.2 781.0 381.3C781.3 382.3 781.7 441.0 782.0 454.5C782.3 468.0 782.7 461.2 783.0 462.4C783.3 463.6 783.7 466.7 784.0 461.7C784.3 456.7 784.7 444.7 785.0 432.4C785.3 420.1 785.7 395.2 786.0 388.0C786.3 380.8 786.7 386.8 787.0 389.2C787.3 391.7 787.7 404.2 788.0 402.5C788.3 400.8 788.7 382.1 789.0 379.2C789.3 376.3 789.7 375.2 790.0 385.0C790.3 394.8 790.7 427.1 791.0 438.0C791.3 449.0 791.7 459.6 792.0 450.7C792.3 441.8 792.7 392.9 793.0 384.6C793.3 376.4 793.7 388.1 794.0 401.3C794.3 414.6 794.7 463.0 795.0 464.2C795.3 465.4 795.7 413.6 796.0 408.5C796.3 403.4 796.7 429.4 797.0 433.7C797.3 437.9 797.7 433.4 798.0 434.1C798.3 434.8 798.7 434.8 799.0 437.8C799.3 440.8 799.7 447.3 800.0 452.1C800.3 456.9 800.7 468.4 801.0 466.7C801.3 465.1 801.7 447.5 802.0 442.4C802.3 437.3 802.7 446.0 803.0 436.1C803.3 426.2 803.7 379.6 804.0 382.9C804.3 386.3 804.7 456.2 805.0 456.1C805.3 456.0 805.7 383.4 806.0 382.1C806.3 380.9 806.7 439.8 807.0 448.7C807.3 457.7 807.7 444.6 808.0 435.6C808.3 426.6 808.7 401.5 809.0 394.7C809.3 387.9 809.7 389.0 810.0 394.7C810.3 400.4 810.7 417.6 811.0 428.9C811.3 440.3 811.7 463.3 812.0 462.7C812.3 462.1 812.7 430.1 813.0 425.3C813.3 420.6 813.7 440.7 814.0 434.2C814.3 427.7 814.7 383.4 815.0 386.1C815.3 388.7 815.7 441.9 816.0 450.0C816.3 458.2 816.7 445.3 817.0 434.9C817.3 424.6 817.7 383.2 818.0 388.1C818.3 393.0 818.7 457.2 819.0 464.3C819.3 471.5 819.7 442.3 820.0 430.8C820.3 419.4 820.7 400.8 821.0 395.6C821.3 390.3 821.7 388.2 822.0 399.5C822.3 410.8 822.7 452.7 823.0 463.4C823.3 474.2 823.7 464.3 824.0 463.9C824.3 463.6 824.7 474.5 825.0 461.5C825.3 448.5 825.7 388.9 826.0 386.0C826.3 383.2 826.7 441.8 827.0 444.4C827.3 446.9 827.7 410.6 828.0 401.2C828.3 391.8 828.7 381.9 829.0 387.9C829.3 393.9 829.7 428.0 830.0 437.2C830.3 446.3 830.7 452.1 831.0 443.0C831.3 434.0 831.7 387.8 832.0 382.7C832.3 377.7 832.7 402.5 833.0 412.7C833.3 422.9 833.7 445.4 834.0 443.9C834.3 442.5 834.7 404.7 835.0 403.9C835.3 403.1 835.7 432.7 836.0 439.1C836.3 445.6 836.7 438.2 837.0 442.7C837.3 447.3 837.7 473.7 838.0 466.7C838.3 459.6 838.7 413.9 839.0 400.5C839.3 387.1 839.7 384.6 840.0 386.4C840.3 388.1 840.7 411.6 841.0 411.2C841.3 410.8 841.7 375.1 842.0 384.0C842.3 392.9 842.7 454.5 843.0 464.9C843.3 475.3 843.7 453.0 844.0 446.4C844.3 439.8 844.7 435.8 845.0 425.2C845.3 414.6 845.7 389.8 846.0 382.8C846.3 375.8 846.7 374.7 847.0 383.1C847.3 391.4 847.7 422.7 848.0 433.0C848.3 443.3 848.7 445.5 849.0 444.9C849.3 444.3 849.7 432.7 850.0 429.2C850.3 425.6 850.7 430.9 851.0 423.6C851.3 416.3 851.7 380.8 852.0 385.3C852.3 389.9 852.7 449.1 853.0 450.9C853.3 452.7 853.7 404.5 854.0 396.4C854.3 388.2 854.7 402.3 855.0 402.0C855.3 401.7 855.7 395.1 856.0 394.6C856.3 394.1 856.7 395.8 857.0 399.0C857.3 402.2 857.7 407.0 858.0 413.6C858.3 420.1 858.7 433.9 859.0 438.2C859.3 442.4 859.7 439.4 860.0 438.9C860.3 438.4 860.7 441.9 861.0 435.2C861.3 428.4 861.7 394.0 862.0 398.2C862.3 402.3 862.7 451.5 863.0 460.0C863.3 468.6 863.7 459.5 864.0 449.6C864.3 439.8 864.7 401.5 865.0 400.7C865.3 400.0 865.7 435.1 866.0 445.2C866.3 455.3 866.7 458.2 867.0 461.3C867.3 464.4 867.7 471.2 868.0 464.0C868.3 456.9 868.7 422.7 869.0 418.4C869.3 414.1 869.7 444.6 870.0 438.3C870.3 432.1 870.7 388.9 871.0 380.7C871.3 372.6 871.7 389.4 872.0 389.3C872.3 389.1 872.7 371.0 873.0 380.1C873.3 389.1 873.7 430.4 874.0 443.7C874.3 456.9 874.7 457.1 875.0 459.6C875.3 462.1 875.7 464.6 876.0 458.5C876.3 452.4 876.7 432.1 877.0 423.1C877.3 414.1 877.7 403.8 878.0 404.5C878.3 405.3 878.7 420.7 879.0 427.7C879.3 434.6 879.7 445.9 880.0 446.4C880.3 446.8 880.7 436.0 881.0 430.3C881.3 424.7 881.7 416.2 882.0 412.4C882.3 408.6 882.7 409.6 883.0 407.7C883.3 405.8 883.7 403.7 884.0 401.2C884.3 398.6 884.7 391.2 885.0 392.5C885.3 393.7 885.7 397.9 886.0 408.5C886.3 419.2 886.7 458.9 887.0 456.3C887.3 453.7 887.7 395.5 888.0 393.0C888.3 390.5 888.7 437.1 889.0 441.1C889.3 445.2 889.7 418.3 890.0 417.1C890.3 416.0 890.7 436.7 891.0 434.2C891.3 431.7 891.7 399.5 892.0 402.1C892.3 404.6 892.7 442.3 893.0 449.5C893.3 456.7 893.7 445.9 894.0 445.2C894.3 444.5 894.7 444.0 895.0 445.4C895.3 446.8 895.7 462.9 896.0 453.5C896.3 444.1 896.7 395.4 897.0 389.2C897.3 383.0 897.7 407.9 898.0 416.1C898.3 424.3 898.7 435.6 899.0 438.3C899.3 441.0 899.7 441.9 900.0 432.1C900.3 422.4 900.7 381.3 901.0 379.7C901.3 378.0 901.7 411.2 902.0 422.4C902.3 433.5 902.7 451.1 903.0 446.6C903.3 442.2 903.7 402.0 904.0 395.9C904.3 389.7 904.7 412.2 905.0 409.5C905.3 406.8 905.7 371.7 906.0 379.8C906.3 387.9 906.7 450.4 907.0 458.0C907.3 465.6 907.7 435.7 908.0 425.2C908.3 414.7 908.7 400.3 909.0 394.9C909.3 389.6 909.7 394.4 910.0 393.0C910.3 391.6 910.7 374.8 911.0 386.5C911.3 398.3 911.7 454.3 912.0 463.4C912.3 472.6 912.7 442.3 913.0 441.2C913.3 440.0 913.7 455.0 914.0 456.5C914.3 458.0 914.7 462.8 915.0 450.3C915.3 437.8 915.7 387.2 916.0 381.4C916.3 375.6 916.7 415.1 917.0 415.7C917.3 416.3 917.7 382.1 918.0 385.1C918.3 388.2 918.7 433.3 919.0 434.2C919.3 435.2 919.7 391.9 920.0 390.8C920.3 389.7 920.7 418.6 921.0 427.5C921.3 436.4 921.7 448.9 922.0 444.1C922.3 439.3 922.7 408.6 923.0 398.6C923.3 388.5 923.7 373.9 924.0 383.8C924.3 393.6 924.7 452.6 925.0 457.7C925.3 462.8 925.7 422.1 926.0 414.5C926.3 407.0 926.7 406.9 927.0 412.4C927.3 418.0 927.7 444.2 928.0 447.8C928.3 451.5 928.7 433.4 929.0 434.6C929.3 435.7 929.7 452.1 930.0 454.6C930.3 457.0 930.7 450.7 931.0 449.1C931.3 447.4 931.7 450.4 932.0 444.6C932.3 438.8 932.7 420.1 933.0 414.3C933.3 408.4 933.7 403.8 934.0 409.7C934.3 415.5 934.7 439.7 935.0 449.1C935.3 458.5 935.7 467.8 936.0 466.0C936.3 464.2 936.7 448.0 937.0 438.2C937.3 428.4 937.7 405.2 938.0 407.3C938.3 409.4 938.7 445.3 939.0 450.7C939.3 456.1 939.7 439.8 940.0 439.5C940.3 439.3 940.7 456.2 941.0 449.1C941.3 442.0 941.7 402.1 942.0 397.0C942.3 392.0 942.7 408.0 943.0 418.8C943.3 429.5 943.7 467.7 944.0 461.4C944.3 455.2 944.7 386.9 945.0 381.2C945.3 375.5 945.7 413.3 946.0 427.4C946.3 441.5 946.8 459.5 947.0 465.9" fill="none" stroke="#1e90ff" stroke-width="1.15" stroke-linejoin="round"/>
<g fill="#dcdcdc" shape-rendering="crispEdges"><rect x="56" y="119" width="1" height="574"/><rect x="947" y="119" width="1" height="574"/><rect x="56" y="687" width="892" height="1"/><rect x="52" y="687" width="4" height="1"/><rect x="948" y="687" width="4" height="1"/><rect x="52" y="665" width="4" height="1"/><rect x="948" y="665" width="4" height="1"/><rect x="52" y="643" width="4" height="1"/><rect x="948" y="643" width="4" height="1"/><rect x="52" y="621" width="4" height="1"/><rect x="948" y="621" width="4" height="1"/><rect x="52" y="599" width="4" height="1"/><rect x="948" y="599" width="4" height="1"/><rect x="52" y="577" width="4" height="1"/><rect x="948" y="577" width="4" height="1"/><rect x="52" y="555" width="4" height="1"/><rect x="948" y="555" width="4" height="1"/><rect x="52" y="533" width="4" height="1"/><rect x="948" y="533" width="4" height="1"/><rect x="52" y="511" width="4" height="1"/><rect x="948" y="511" width="4" height="1"/><rect x="52" y="489" width="4" height="1"/><rect x="948" y="489" width="4" height="1"/><rect x="52" y="467" width="4" height="1"/><rect x="948" y="467" width="4" height="1"/><rect x="52" y="445" width="4" height="1"/><rect x="948" y="445" width="4" height="1"/><rect x="52" y="423" width="4" height="1"/><rect x="948" y="423" width="4" height="1"/><rect x="52" y="401" width="4" height="1"/><rect x="948" y="401" width="4" height="1"/><rect x="52" y="379" width="4" height="1"/><rect x="948" y="379" width="4" height="1"/><rect x="52" y="357" width="4" height="1"/><rect x="948" y="357" width="4" height="1"/><rect x="52" y="335" width="4" height="1"/><rect x="948" y="335" width="4" height="1"/><rect x="52" y="313" width="4" height="1"/><rect x="948" y="313" width="4" height="1"/><rect x="52" y="291" width="4" height="1"/><rect x="948" y="291" width="4" height="1"/><rect x="52" y="269" width="4" height="1"/><rect x="948" y="269" width="4" height="1"/><rect x="52" y="247" width="4" height="1"/><rect x="948" y="247" width="4" height="1"/><rect x="52" y="225" width="4" height="1"/><rect x="948" y="225" width="4" height="1"/><rect x="52" y="203" width="4" height="1"/><rect x="948" y="203" width="4" height="1"/><rect x="52" y="181" width="4" height="1"/><rect x="948" y="181" width="4" height="1"/><rect x="52" y="159" width="4" height="1"/><rect x="948" y="159" width="4" height="1"/><rect x="52" y="137" width="4" height="1"/><rect x="948" y="137" width="4" height="1"/><polygon points="56.5,117.5 56.5,127.5 51.5,127.5"/><polygon points="947.5,117.5 947.5,127.5 952.5,127.5"/></g>
<g font-family='"Liberation Sans", "Noto Sans CJK SC", sans-serif'><text x="47.5" y="690.8" font-size="11" fill="#dadada" text-anchor="middle" >0</text><text x="956.0" y="690.8" font-size="11" fill="#dadada" text-anchor="middle" >0</text><text x="41.5 47.5" y="668.8" font-size="11" fill="#dadada" text-anchor="middle" >10</text><text x="956.0 962.0 968.0" y="668.8" font-size="11" fill="#dadada" text-anchor="middle" >0.2</text><text x="41.5 47.5" y="646.8" font-size="11" fill="#dadada" text-anchor="middle" >20</text><text x="956.0 962.0 968.0" y="646.8" font-size="11" fill="#dadada" text-anchor="middle" >0.4</text><text x="41.5 47.5" y="624.8" font-size="11" fill="#dadada" text-anchor="middle" >30</text><text x="956.0 962.0 968.0" y="624.8" font-size="11" fill="#dadada" text-anchor="middle" >0.6</text><text x="41.5 47.5" y="602.8" font-size="11" fill="#dadada" text-anchor="middle" >40</text><text x="956.0 962.0 968.0" y="602.8" font-size="11" fill="#dadada" text-anchor="middle" >0.8</text><text x="41.5 47.5" y="580.8" font-size="11" fill="#dadada" text-anchor="middle" >50</text><text x="956.0" y="580.8" font-size="11" fill="#dadada" text-anchor="middle" >1</text><text x="41.5 47.5" y="558.8" font-size="11" fill="#dadada" text-anchor="middle" >60</text><text x="956.0 962.0 968.0" y="558.8" font-size="11" fill="#dadada" text-anchor="middle" >1.2</text><text x="41.5 47.5" y="536.8" font-size="11" fill="#dadada" text-anchor="middle" >70</text><text x="956.0 962.0 968.0" y="536.8" font-size="11" fill="#dadada" text-anchor="middle" >1.4</text><text x="41.5 47.5" y="514.8" font-size="11" fill="#dadada" text-anchor="middle" >80</text><text x="956.0 962.0 968.0" y="514.8" font-size="11" fill="#dadada" text-anchor="middle" >1.6</text><text x="41.5 47.5" y="492.8" font-size="11" fill="#dadada" text-anchor="middle" >90</text><text x="956.0 962.0 968.0" y="492.8" font-size="11" fill="#dadada" text-anchor="middle" >1.8</text><text x="35.5 41.5 47.5" y="470.8" font-size="11" fill="#dadada" text-anchor="middle" >100</text><text x="956.0" y="470.8" font-size="11" fill="#dadada" text-anchor="middle" >2</text><text x="35.5 41.5 47.5" y="448.8" font-size="11" fill="#dadada" text-anchor="middle" >110</text><text x="956.0 962.0 968.0" y="448.8" font-size="11" fill="#dadada" text-anchor="middle" >2.2</text><text x="35.5 41.5 47.5" y="426.8" font-size="11" fill="#dadada" text-anchor="middle" >120</text><text x="956.0 962.0 968.0" y="426.8" font-size="11" fill="#dadada" text-anchor="middle" >2.4</text><text x="35.5 41.5 47.5" y="404.8" font-size="11" fill="#dadada" text-anchor="middle" >130</text><text x="956.0 962.0 968.0" y="404.8" font-size="11" fill="#dadada" text-anchor="middle" >2.6</text><text x="35.5 41.5 47.5" y="382.8" font-size="11" fill="#dadada" text-anchor="middle" >140</text><text x="956.0 962.0 968.0" y="382.8" font-size="11" fill="#dadada" text-anchor="middle" >2.8</text><text x="35.5 41.5 47.5" y="360.8" font-size="11" fill="#dadada" text-anchor="middle" >150</text><text x="956.0" y="360.8" font-size="11" fill="#dadada" text-anchor="middle" >3</text><text x="35.5 41.5 47.5" y="338.8" font-size="11" fill="#dadada" text-anchor="middle" >160</text><text x="956.0 962.0 968.0" y="338.8" font-size="11" fill="#dadada" text-anchor="middle" >3.2</text><text x="35.5 41.5 47.5" y="316.8" font-size="11" fill="#dadada" text-anchor="middle" >170</text><text x="956.0 962.0 968.0" y="316.8" font-size="11" fill="#dadada" text-anchor="middle" >3.4</text><text x="35.5 41.5 47.5" y="294.8" font-size="11" fill="#dadada" text-anchor="middle" >180</text><text x="956.0 962.0 968.0" y="294.8" font-size="11" fill="#dadada" text-anchor="middle" >3.6</text><text x="35.5 41.5 47.5" y="272.8" font-size="11" fill="#dadada" text-anchor="middle" >190</text><text x="956.0 962.0 968.0" y="272.8" font-size="11" fill="#dadada" text-anchor="middle" >3.8</text><text x="35.5 41.5 47.5" y="250.8" font-size="11" fill="#dadada" text-anchor="middle" >200</text><text x="956.0" y="250.8" font-size="11" fill="#dadada" text-anchor="middle" >4</text><text x="35.5 41.5 47.5" y="228.8" font-size="11" fill="#dadada" text-anchor="middle" >210</text><text x="956.0 962.0 968.0" y="228.8" font-size="11" fill="#dadada" text-anchor="middle" >4.2</text><text x="35.5 41.5 47.5" y="206.8" font-size="11" fill="#dadada" text-anchor="middle" >220</text><text x="956.0 962.0 968.0" y="206.8" font-size="11" fill="#dadada" text-anchor="middle" >4.4</text><text x="35.5 41.5 47.5" y="184.8" font-size="11" fill="#dadada" text-anchor="middle" >230</text><text x="956.0 962.0 968.0" y="184.8" font-size="11" fill="#dadada" text-anchor="middle" >4.6</text><text x="35.5 41.5 47.5" y="162.8" font-size="11" fill="#dadada" text-anchor="middle" >240</text><text x="956.0 962.0 968.0" y="162.8" font-size="11" fill="#dadada" text-anchor="middle" >4.8</text><text x="35.5 41.5 47.5" y="140.8" font-size="11" fill="#dadada" text-anchor="middle" >250</text><text x="956.0" y="140.8" font-size="11" fill="#dadada" text-anchor="middle" >5</text><text x="202.5 208.5 214.5 220.5 226.5 232.5 238.5 244.5 250.5 256.5 262.5 268.5 274.5 280.5 286.5 292.5 298.5 304.5 310.5" y="700.5" font-size="11" fill="#dadada" text-anchor="middle" >2019-01-19 09:28:12</text><text x="402.5 408.5 414.5 420.5 426.5 432.5 438.5 444.5 450.5 456.5 462.5 468.5 474.5 480.5 486.5 492.5 498.5 504.5 510.5" y="700.5" font-size="11" fill="#dadada" text-anchor="middle" >2019-01-19 09:31:32</text><text x="602.5 608.5 614.5 620.5 626.5 632.5 638.5 644.5 650.5 656.5 662.5 668.5 674.5 680.5 686.5 692.5 698.5 704.5 710.5" y="700.5" font-size="11" fill="#dadada" text-anchor="middle" >2019-01-19 09:34:52</text><text x="802.5 808.5 814.5 820.5 826.5 832.5 838.5 844.5 850.5 856.5 862.5 868.5 874.5 880.5 886.5 892.5 898.5 904.5 910.5" y="700.5" font-size="11" fill="#dadada" text-anchor="middle" >2019-01-19 09:38:12</text></g>
<line x1="64" y1="99.5" x2="95" y2="99.5" stroke="#1e7fd8" stroke-width="1.2"/><circle cx="79.5" cy="99.5" r="7.2" fill="#2d2d2d" stroke="#1e7fd8" stroke-width="1.1"/><line x1="72" y1="99.5" x2="87" y2="99.5" stroke="#1e7fd8" stroke-width="1.2"/>
<text x="100" y="102.8" font-size="12" fill="#ffffff" font-weight="300" font-family='"Liberation Sans", "Noto Sans CJK SC", sans-serif'>温度</text>
<rect x="342" y="132" width="1" height="556" fill="#ffffff" shape-rendering="crispEdges"/>
<rect x="347.5" y="261.5" width="150" height="30" fill="#333333" stroke="#ff69b4" stroke-width="1" shape-rendering="crispEdges"/>
<text x="353" y="280.5" font-size="16" fill="#00ffff" font-family='"Liberation Serif", "Noto Serif CJK SC", serif'>温度</text>

<text x="432.5 440.5 448.5 456.5 464.5 472.5 482.5" y="280.5" font-size="16" fill="#00ffff" text-anchor="middle" font-family='"Liberation Serif", "Noto Serif CJK SC", serif'>137.7 ℃</text>
<rect x="292.5" y="689.5" width="100" height="18" fill="#2d2d2d" fill-opacity="0.85" stroke="#ff69b4" stroke-width="1" shape-rendering="crispEdges"/>
<text x="320.5 326.5 332.5 338.5 344.5 350.5 356.5 362.5" y="700.5" font-size="11" fill="#00ffff" text-anchor="middle" font-family='"Liberation Sans", "Noto Sans CJK SC", sans-serif'>09:29:37</text>
<g shape-rendering="crispEdges"><rect x="57" y="710" width="890" height="17" fill="#f0f0f0"/><rect x="74" y="711" width="346" height="15" fill="#cdcdcd"/></g>
<path d="M67.2 715.2 L63.8 718.5 L67.2 721.8" fill="none" stroke="#505050" stroke-width="2"/>
<path d="M936.8 715.2 L940.2 718.5 L936.8 721.8" fill="none" stroke="#505050" stroke-width="2"/>
<ellipse cx="356.3" cy="661" rx="93.7" ry="61" fill="none" stroke="#f03535" stroke-width="3"/>
</svg>
</body></html>
